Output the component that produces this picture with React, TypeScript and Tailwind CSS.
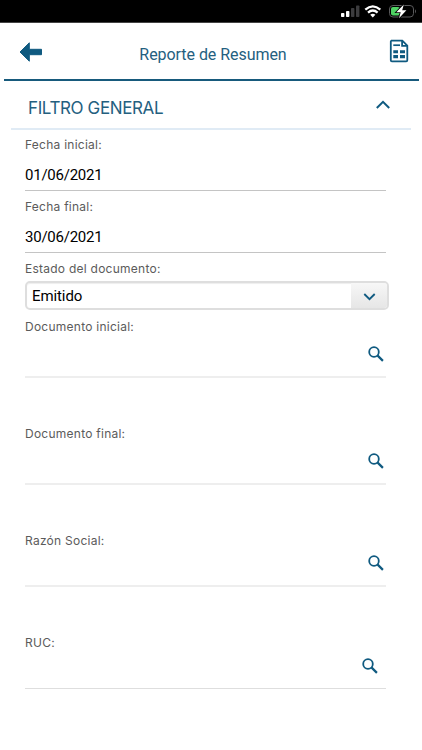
import { useState } from 'react';

interface SearchFieldProps {
  label: string;
  className?: string;
  rowClassName?: string;
}

const SearchIcon = () => (
  <svg width="16" height="16" viewBox="0 0 16 16" fill="none" stroke="#0f5a80">
    <circle cx="6" cy="6" r="4.8" strokeWidth="1.8" />
    <path d="M9.4 9.4L14.9 14.9" strokeWidth="2.2" />
  </svg>
);

const StatusBar = () => (
  <div className="flex h-[23px] items-start justify-end border-b border-[#444] bg-black">
    <svg width="82" height="22" viewBox="340 0 82 22">
      <rect x="341" y="13" width="3.4" height="4" rx="0.8" fill="#fff" />
      <rect x="346" y="11" width="3.4" height="6" rx="0.8" fill="#fff" />
      <rect x="351" y="8" width="3.4" height="9" rx="0.8" fill="#3c3c3e" />
      <rect x="356" y="5.5" width="3.4" height="11.5" rx="0.8" fill="#3c3c3e" />
      <g fill="none" stroke="#fff" strokeWidth="2.3">
        <path d="M365.3 9.6Q372.8 3.1 380.3 9.6" />
        <path d="M368 12.6Q372.8 8.5 377.6 12.6" />
      </g>
      <path d="M370.2 14.7Q372.8 12.7 375.4 14.7L372.8 17.4Z" fill="#fff" />
      <rect x="389.5" y="5.5" width="24" height="11.5" rx="3.5" fill="none" stroke="#5a5a5c" />
      <path d="M415 9.2Q417 11.2 415 13.4Z" fill="#5a5a5c" />
      <rect x="391" y="7" width="9" height="8.5" rx="2" fill="#4fd264" />
      <path
        d="M403.8 4.4L396.3 12.2H400.7L399 18.2L406.4 10.3H402.2Z"
        fill="#fff"
        stroke="#000"
        strokeWidth="1.6"
        paintOrder="stroke"
      />
    </svg>
  </div>
);

const FieldLabel = ({ children }: { children: string }) => (
  <div className="h-[18px] text-[12px] leading-5 tracking-[0.25px] text-[#5b5b5b]">{children}</div>
);

const DateField = ({ label, value }: { label: string; value: string }) => (
  <div>
    <FieldLabel>{label}</FieldLabel>
    <div className="h-[38px] border-b border-[#c4c4c4] pt-3 font-[Roboto,sans-serif] text-[15px] leading-5 tracking-[-0.24px] text-black">
      {value}
    </div>
  </div>
);

const SearchField = ({ label, className = '', rowClassName = '' }: SearchFieldProps) => (
  <div className={className}>
    <FieldLabel>{label}</FieldLabel>
    <div className={`flex justify-end ${rowClassName}`}>
      <button type="button" aria-label={label} className="h-4">
        <SearchIcon />
      </button>
    </div>
  </div>
);

export default function App() {
  const [open, setOpen] = useState<boolean>(true);

  return (
    <div className="h-[750px] w-[422px] overflow-hidden bg-white font-[Inter,sans-serif]">
      <StatusBar />

      <header className="ml-1 mr-[3px] flex h-[58px] items-start justify-between border-b-2 border-[#175a7c] pl-[15px] pr-[10px]">
        <button type="button" aria-label="Volver" className="mt-[18px]">
          <svg width="24" height="22" viewBox="0 0 24 22">
            <path
              d="M1 11L10.3 1.8V8.3H22.5V13.7H10.3V20.2Z"
              fill="#0f5a80"
              stroke="#0f5a80"
              strokeWidth="1"
              strokeLinejoin="round"
            />
          </svg>
        </button>
        <h1 className="mt-[22px] -translate-x-[3px] font-[Roboto,sans-serif] text-base leading-5 tracking-[-0.05px] text-[#24607f]">
          Reporte de Resumen
        </h1>
        <button type="button" aria-label="Reporte" className="mt-4">
          <svg width="20" height="24" viewBox="0 0 20 24">
            <path
              d="M2 1.6H13.3L18.3 6.6V21.2Q18.3 22.3 17.2 22.3H2.9Q1.8 22.3 1.8 21.2V2.6Q1.8 1.6 2.8 1.6ZM13.1 1.8V6.8H18.2"
              fill="none"
              stroke="#0f5a80"
              strokeWidth="1.8"
            />
            <path d="M4.3 6.2H11" stroke="#0f5a80" strokeWidth="1.7" />
            <path
              d="M4.3 11.2H9V14.3H4.3ZM11 11.2H16V14.3H11ZM4.3 16H9V19.2H4.3ZM11 16H16V19.2H11Z"
              fill="#0f5a80"
            />
          </svg>
        </button>
      </header>

      <button
        type="button"
        onClick={() => setOpen(!open)}
        className="ml-[11px] flex h-[49px] w-[400px] justify-between border-b-2 border-[#e0ebf5] pl-[17px] pr-5"
      >
        <span className="mt-4 text-[17px] leading-[22px] tracking-[-0.38px] text-[#24607f]">FILTRO GENERAL</span>
        <svg className="mt-[18px]" width="16" height="11" viewBox="0 0 16 11" fill="none">
          <path d="M1.8 9L8 2.8L14.2 9" stroke="#0f5a80" strokeWidth="2" />
        </svg>
      </button>

      {open && (
        <main className="ml-[25px] w-[361px] pt-[5px]">
          <div className="flex flex-col gap-1.5">
            <DateField label="Fecha inicial:" value="01/06/2021" />
            <DateField label="Fecha final:" value="30/06/2021" />
            <div>
              <FieldLabel>Estado del documento:</FieldLabel>
              <div className="mt-1 flex h-[29px] w-[364px] overflow-hidden rounded-[5px] border-2 border-[#dedede] shadow-[inset_0_1px_1px_#eeeeee]">
                <span className="flex-1 pl-[5px] font-[Roboto,sans-serif] text-[15px] leading-[26px] tracking-[-0.1px] text-black">
                  Emitido
                </span>
                <span className="flex w-9 items-center justify-center bg-linear-to-b from-[#f7f7f7] to-[#e6e6e6] pt-0.5">
                  <svg width="13" height="9" viewBox="0 0 13 9" fill="none">
                    <path d="M1.3 2L6.5 7.2L11.7 2" stroke="#0f5a80" strokeWidth="1.8" />
                  </svg>
                </span>
              </div>
            </div>
          </div>

          <SearchField
            label="Documento inicial:"
            className="mt-[7px]"
            rowClassName="h-[43px] border-b-2 border-[#eeeeee] pt-[11px] pr-0.5"
          />
          <SearchField
            label="Documento final:"
            className="mt-[46px]"
            rowClassName="h-[43px] border-b-2 border-[#eeeeee] pt-[11px] pr-0.5"
          />
          <SearchField
            label="Razón Social:"
            className="mt-[46px]"
            rowClassName="h-[38px] border-b-2 border-[#eeeeee] pt-1.5 pr-0.5"
          />
          <SearchField
            label="RUC:"
            className="mt-[46px]"
            rowClassName="h-[38px] border-b border-[#dedede] pt-[7px] pr-2"
          />
        </main>
      )}
    </div>
  );
}
